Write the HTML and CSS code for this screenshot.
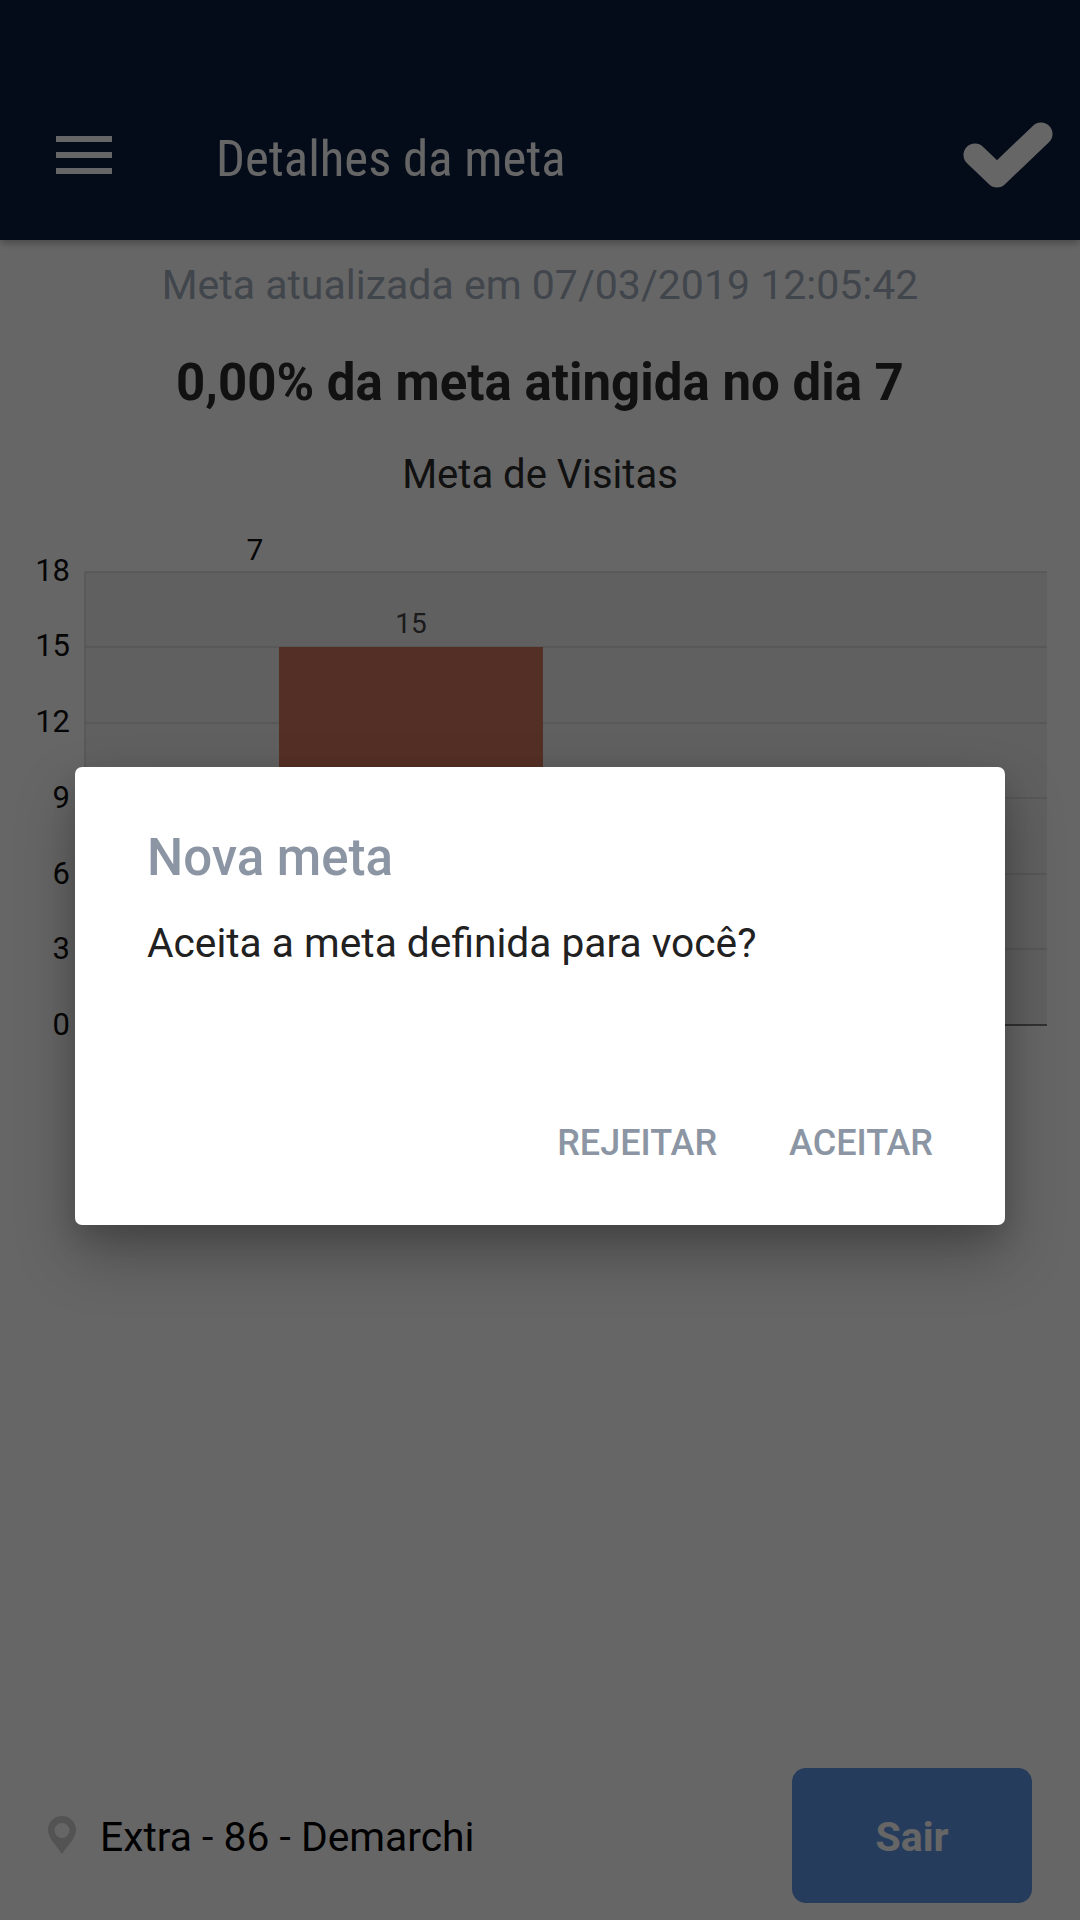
FILE: index.html
```html
<!DOCTYPE html>
<html>
    <head>
        <title>Detalhes da meta</title>
        <meta charset="UTF-8">
        <link rel="stylesheet" href="styles.css">
    </head>
    <body>
        <div class="page">
            <header class="topbar">
                <div class="menu">
                    <span></span>
                    <span></span>
                    <span></span>
                </div>
                <h1 class="topbar-title">Detalhes da meta</h1>
                <svg class="check" width="92" height="70" viewBox="0 0 92 70">
                    <path d="M12 33 L34 54 L78 12" fill="none" stroke="#fff" stroke-width="23" stroke-linecap="round" stroke-linejoin="round"/>
                </svg>
            </header>

            <p class="updated">Meta atualizada em 07/03/2019 12:05:42</p>
            <h2 class="progress">0,00% da meta atingida no dia 7</h2>
            <h3 class="chart-title">Meta de Visitas</h3>

            <!-- y in the chart = screen y - 530 -->
            <svg class="chart" width="1080" height="520" viewBox="0 0 1080 520">
                <rect class="plot" x="85" y="42" width="962" height="453"/>
                <line class="grid" x1="85" y1="42" x2="1047" y2="42"/>
                <line class="grid" x1="85" y1="117" x2="1047" y2="117"/>
                <line class="grid" x1="85" y1="193" x2="1047" y2="193"/>
                <line class="grid" x1="85" y1="268" x2="1047" y2="268"/>
                <line class="grid" x1="85" y1="344" x2="1047" y2="344"/>
                <line class="grid" x1="85" y1="419" x2="1047" y2="419"/>
                <line class="grid" x1="85" y1="42" x2="85" y2="495"/>
                <line class="baseline" x1="85" y1="495" x2="1047" y2="495"/>
                <rect class="bar" x="279" y="117" width="264" height="378"/>
                <text class="axis" x="70" y="51">18</text>
                <text class="axis" x="70" y="126">15</text>
                <text class="axis" x="70" y="202">12</text>
                <text class="axis" x="70" y="278">9</text>
                <text class="axis" x="70" y="354">6</text>
                <text class="axis" x="70" y="429">3</text>
                <text class="axis" x="70" y="505">0</text>
                <text class="top-label" x="255" y="30">7</text>
                <text class="bar-label" x="411" y="103">15</text>
            </svg>

            <footer class="footer">
                <div class="place">
                    <svg class="pin" width="30" height="38" viewBox="0 0 30 38">
                        <path fill-rule="evenodd" d="M15 0 C6.7 0 1 6.3 1 14 C1 22 9 29 15 38 C21 29 29 22 29 14 C29 6.3 23.3 0 15 0 Z M15 7 A7.5 7.5 0 1 1 15 22 A7.5 7.5 0 1 1 15 7 Z" fill="#d0d0d0"/>
                    </svg>
                    <span class="place-name">Extra - 86 - Demarchi</span>
                </div>
                <button class="leave">Sair</button>
            </footer>
        </div>

        <div class="overlay"></div>

        <div class="dialog">
            <h2 class="dialog-title">Nova meta</h2>
            <p class="dialog-text">Aceita a meta definida para você?</p>
            <div class="dialog-actions">
                <button class="dialog-button">REJEITAR</button>
                <button class="dialog-button">ACEITAR</button>
            </div>
        </div>
    </body>
</html>
```

FILE: styles.css
```css
* {
    box-sizing: border-box;
}
body {
    margin: 0;
    font-family: Roboto, "Noto Sans", sans-serif;
    background-color: #fff;
}
h1, h2, h3, p {
    margin: 0;
    font-weight: 400;
}
.page {
    display: flex;
    flex-direction: column;
    width: 1080px;
    height: 1920px;
}

/* top bar */
.topbar {
    display: flex;
    align-items: center;
    height: 240px;
    padding: 76px 25px 0 56px;
    background-color: #0a1e40;
    box-shadow: 0 3px 8px rgba(0, 0, 0, 0.3);
}
.menu {
    display: flex;
    flex-direction: column;
    gap: 10px;
    width: 56px;
    margin-top: -6px;
}
.menu span {
    height: 6px;
    background-color: #fff;
}
.topbar-title {
    flex: 1;
    margin-top: 2px;
    margin-left: 104px;
    font-size: 50.8px;
    line-height: 60px;
    color: #fff;
    font-stretch: 75%;
}
.check {
    margin-top: -2px;
}

/* summary */
.updated {
    margin-top: 20px;
    font-size: 41px;
    line-height: 50px;
    text-align: center;
    color: #a4adbd;
}
.progress {
    margin-top: 43px;
    font-size: 51px;
    line-height: 60px;
    font-weight: 700;
    text-align: center;
    color: #2c2c2c;
}
.chart-title {
    margin-top: 37px;
    font-size: 40px;
    line-height: 50px;
    text-align: center;
    color: #2c2c2c;
}

/* chart */
.chart {
    display: block;
    margin-top: 30px;
}
.plot {
    fill: #f0f0f0;
}
.grid {
    stroke: #c6c6c6;
    stroke-width: 1;
}
.baseline {
    stroke: #000;
    stroke-width: 1;
}
.bar {
    fill: #d2755c;
}
.axis {
    font-size: 31px;
    text-anchor: end;
    fill: #111;
}
.top-label {
    font-size: 30px;
    text-anchor: middle;
    fill: #111;
}
.bar-label {
    font-size: 28px;
    text-anchor: middle;
    fill: #444;
}

/* footer */
.footer {
    display: flex;
    align-items: center;
    justify-content: space-between;
    margin-top: auto;
    padding: 0 48px 17px 47px;
}
.place {
    display: flex;
    align-items: center;
    gap: 23px;
}
.pin {
    margin-top: -1px;
}
.place-name {
    margin-top: 3px;
    font-size: 40.8px;
    line-height: 50px;
    color: #000;
}
.leave {
    width: 240px;
    height: 135px;
    padding-top: 3px;
    border: none;
    border-radius: 14px;
    background-color: #5f96e6;
    font-family: inherit;
    font-size: 41px;
    font-weight: 700;
    color: #fff;
}

/* dialog over the dimmed page */
.overlay {
    position: absolute;
    top: 0;
    left: 0;
    width: 1080px;
    height: 1920px;
    background-color: rgba(0, 0, 0, 0.6);
}
.dialog {
    position: absolute;
    top: 767px;
    left: 75px;
    display: flex;
    flex-direction: column;
    width: 930px;
    height: 458px;
    padding: 61px 72px 62px;
    border-radius: 7px;
    background-color: #fff;
    box-shadow: 0 30px 60px rgba(0, 0, 0, 0.28), 0 10px 24px rgba(0, 0, 0, 0.12);
}
.dialog-title {
    font-size: 51px;
    line-height: 60px;
    font-weight: 500;
    color: #8b95a3;
}
.dialog-text {
    margin-top: 30px;
    font-size: 40.7px;
    line-height: 50px;
    color: #212121;
}
.dialog-actions {
    display: flex;
    justify-content: flex-end;
    gap: 72px;
    margin-top: auto;
}
.dialog-button {
    padding: 0;
    border: none;
    background: none;
    font-family: inherit;
    font-size: 36px;
    line-height: 40px;
    font-weight: 500;
    color: #8b95a3;
}
```
